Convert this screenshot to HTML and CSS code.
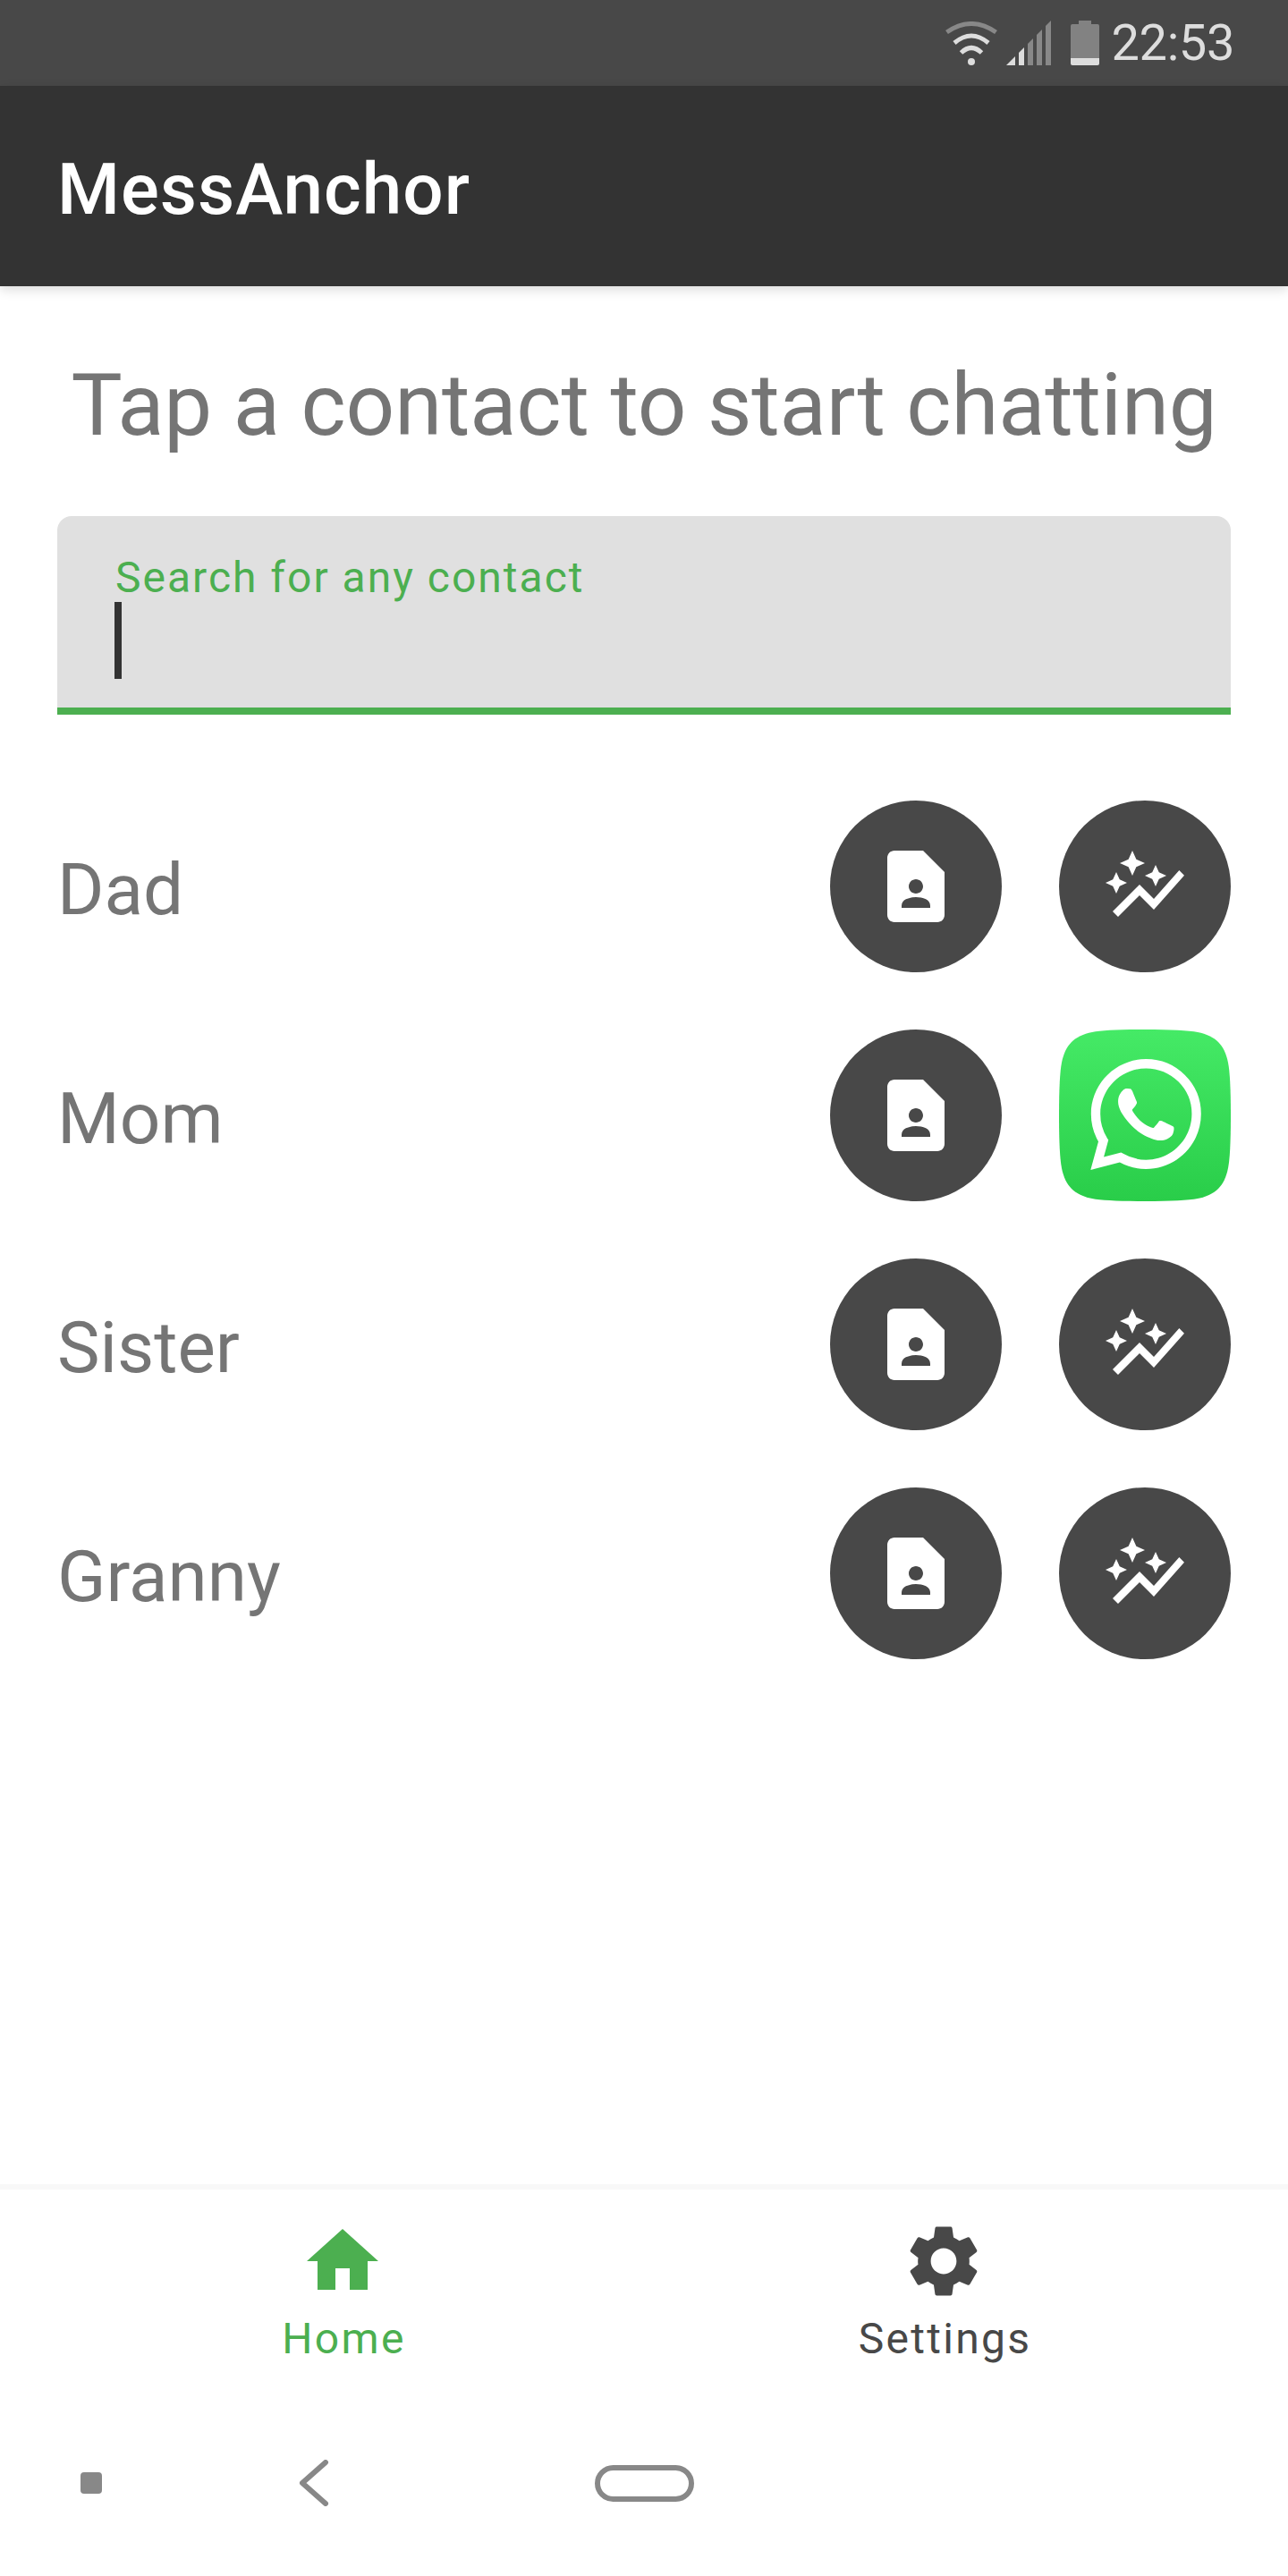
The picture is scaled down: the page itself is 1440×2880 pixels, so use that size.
FILE: index.html
```html
<!DOCTYPE html>
<html lang="en">
<head>
  <meta charset="UTF-8" />
  <meta name="viewport" content="width=device-width, initial-scale=1.0"/>
  <title>MessAnchor</title>
  <link rel="stylesheet" href="styles.css">
</head>
<body>
  <svg class="icon-defs" width="0" height="0">
    <symbol id="icon-contact" viewBox="0 0 24 24">
      <path d="M14 2H6c-1.1 0-2 .9-2 2v16c0 1.1.9 2 2 2h12c1.1 0 2-.9 2-2V8l-6-6zm-2 8c1.1 0 2 .9 2 2s-.9 2-2 2-2-.9-2-2 .9-2 2-2zm4 8H8v-.57c0-.81.48-1.53 1.22-1.85.85-.37 1.79-.58 2.78-.58s1.93.21 2.78.58c.74.32 1.22 1.04 1.22 1.85V18z"/>
    </symbol>
    <symbol id="icon-graph" viewBox="0 0 24 24">
      <path d="M14.06 9.94L12 9l2.06-.94L15 6l.94 2.06L18 9l-2.06.94L15 12l-.94-2.06zM4 14l.94-2.06L7 11l-2.06-.94L4 8l-.94 2.06L1 11l2.06.94L4 14zM8.5 9l1.09-2.41L12 5.5 9.59 4.41 8.5 2 7.41 4.41 5 5.5l2.41 1.09L8.5 9zM4.5 20.5l6-6.01 4 4L23 8.93l-1.41-1.41-7.09 7.97-4-4L3 19l1.5 1.5z"/>
    </symbol>
  </svg>

  <div class="phone">
    <div class="status-bar">
      <svg class="status-wifi" width="58" height="49" viewBox="0 0 58 49" fill="none">
        <path d="M1.5 12Q29 -7 56.5 12" stroke="#888" stroke-width="5"/>
        <path d="M10 24Q29 8 48 24" stroke="#ddd" stroke-width="5"/>
        <path d="M17.5 35Q29 24 40.5 35" stroke="#ddd" stroke-width="5"/>
        <circle cx="29" cy="45" r="4" fill="#ddd"/>
      </svg>
      <svg class="status-signal" width="50" height="50" viewBox="0 0 50 50">
        <polygon points="0,50 10,40 10,50" fill="#ddd"/>
        <polygon points="14,50 14,36 20,30 20,50" fill="#ddd"/>
        <polygon points="24,50 24,26 30,20 30,50" fill="#888"/>
        <polygon points="34,50 34,16 40,10 40,50" fill="#888"/>
        <polygon points="44,50 44,6 50,0 50,50" fill="#888"/>
      </svg>
      <svg class="status-battery" width="32" height="50" viewBox="0 0 32 50">
        <path d="M9 0h14v4h7a2 2 0 0 1 2 2v36H0V6a2 2 0 0 1 2-2h7z" fill="#828282"/>
        <path d="M0 42h32v6a2 2 0 0 1-2 2H2a2 2 0 0 1-2-2z" fill="#ddd"/>
      </svg>
      <span class="status-time">22:53</span>
    </div>

    <header class="app-bar">
      <h1>MessAnchor</h1>
    </header>

    <main class="content">
      <h2 class="page-title">Tap a contact to start chatting</h2>

      <div class="search-field">
        <label class="search-label">Search for any contact</label>
        <div class="search-caret"></div>
      </div>

      <ul class="contact-list">
        <li class="contact-row">
          <span class="contact-name">Dad</span>
          <div class="contact-actions">
            <button class="round-btn"><svg width="96" height="96"><use href="#icon-contact"/></svg></button>
            <button class="round-btn"><svg width="96" height="96"><use href="#icon-graph"/></svg></button>
          </div>
        </li>
        <li class="contact-row">
          <span class="contact-name">Mom</span>
          <div class="contact-actions">
            <button class="round-btn"><svg width="96" height="96"><use href="#icon-contact"/></svg></button>
            <svg class="whatsapp" width="192" height="192" viewBox="0 0 192 192">
              <defs>
                <linearGradient id="wa-bg" x1="0" y1="0" x2="0" y2="1">
                  <stop offset="0" stop-color="#45ea66"/>
                  <stop offset="1" stop-color="#29cd49"/>
                </linearGradient>
              </defs>
              <path d="M96 0C125 0 145 1 155 3C175 7 185 17 189 37C191 47 192 67 192 96C192 125 191 145 189 155C185 175 175 185 155 189C145 191 125 192 96 192C67 192 47 191 37 189C17 185 7 175 3 155C1 145 0 125 0 96C0 67 1 47 3 37C7 17 17 7 37 3C47 1 67 0 96 0Z" fill="url(#wa-bg)"/>
              <g transform="translate(35 33) scale(5.17)">
                <path fill="#fff" d="M17.472 14.382c-.297-.149-1.758-.867-2.03-.967-.273-.099-.471-.148-.67.15-.197.297-.767.966-.94 1.164-.173.199-.347.223-.644.075-.297-.15-1.255-.463-2.39-1.475-.883-.788-1.48-1.761-1.653-2.059-.173-.297-.018-.458.13-.606.134-.133.298-.347.446-.52.149-.174.198-.298.298-.497.099-.198.05-.371-.025-.52-.075-.149-.669-1.612-.916-2.207-.242-.579-.487-.5-.669-.51-.173-.008-.371-.01-.57-.01-.198 0-.52.074-.792.372-.272.297-1.04 1.016-1.04 2.479 0 1.462 1.065 2.875 1.213 3.074.149.198 2.096 3.2 5.077 4.487.709.306 1.262.489 1.694.625.712.227 1.36.195 1.871.118.571-.085 1.758-.719 2.006-1.413.248-.694.248-1.289.173-1.413-.074-.124-.272-.198-.57-.347m-5.421 7.403h-.004a9.87 9.87 0 01-5.031-1.378l-.361-.214-3.741.982.998-3.648-.235-.374a9.86 9.86 0 01-1.51-5.26c.001-5.45 4.436-9.884 9.888-9.884 2.64 0 5.122 1.03 6.988 2.898a9.825 9.825 0 012.893 6.994c-.003 5.45-4.437 9.884-9.885 9.884m8.413-18.297A11.815 11.815 0 0012.05 0C5.495 0 .16 5.335.157 11.892c0 2.096.547 4.142 1.588 5.945L.057 24l6.305-1.654a11.882 11.882 0 005.683 1.448h.005c6.554 0 11.89-5.335 11.893-11.893a11.821 11.821 0 00-3.48-8.413z"/>
              </g>
            </svg>
          </div>
        </li>
        <li class="contact-row">
          <span class="contact-name">Sister</span>
          <div class="contact-actions">
            <button class="round-btn"><svg width="96" height="96"><use href="#icon-contact"/></svg></button>
            <button class="round-btn"><svg width="96" height="96"><use href="#icon-graph"/></svg></button>
          </div>
        </li>
        <li class="contact-row">
          <span class="contact-name">Granny</span>
          <div class="contact-actions">
            <button class="round-btn"><svg width="96" height="96"><use href="#icon-contact"/></svg></button>
            <button class="round-btn"><svg width="96" height="96"><use href="#icon-graph"/></svg></button>
          </div>
        </li>
      </ul>
    </main>

    <nav class="tab-bar">
      <a class="tab tab-active">
        <svg width="96" height="96" viewBox="0 0 24 24"><path d="M10 20v-6h4v6h5v-8h3L12 3 2 12h3v8z"/></svg>
        <span class="tab-label">Home</span>
      </a>
      <a class="tab">
        <svg width="96" height="96" viewBox="0 0 24 24"><path d="M19.14 12.94c.04-.3.06-.61.06-.94 0-.32-.02-.64-.07-.94l2.03-1.58c.18-.14.23-.41.12-.61l-1.92-3.32c-.12-.22-.37-.29-.59-.22l-2.39.96c-.5-.38-1.03-.7-1.62-.94l-.36-2.54c-.04-.24-.24-.41-.48-.41h-3.84c-.24 0-.43.17-.47.41l-.36 2.54c-.59.24-1.13.57-1.62.94l-2.39-.96c-.22-.08-.47 0-.59.22L2.74 8.87c-.12.21-.08.47.12.61l2.03 1.58c-.05.3-.09.63-.09.94s.02.64.07.94l-2.03 1.58c-.18.14-.23.41-.12.61l1.92 3.32c.12.22.37.29.59.22l2.39-.96c.5.38 1.03.7 1.62.94l.36 2.54c.05.24.24.41.48.41h3.84c.24 0 .44-.17.47-.41l.36-2.54c.59-.24 1.13-.56 1.62-.94l2.39.96c.22.08.47 0 .59-.22l1.92-3.32c.12-.22.07-.47-.12-.61l-2.01-1.58zM12 15.6c-1.98 0-3.6-1.62-3.6-3.6s1.62-3.6 3.6-3.6 3.6 1.62 3.6 3.6-1.62 3.6-3.6 3.6z"/></svg>
        <span class="tab-label">Settings</span>
      </a>
    </nav>

    <div class="system-nav">
      <div class="sys-square"></div>
      <svg class="sys-back" width="34" height="52" viewBox="0 0 34 52" fill="none">
        <path d="M30 3L4 26L30 49" stroke="#888" stroke-width="6" stroke-linecap="round" stroke-linejoin="round"/>
      </svg>
      <div class="sys-home"></div>
    </div>
  </div>
</body>
</html>
```

FILE: styles.css
```css
body {
  margin: 0;
  padding: 0;
  background: #fff;
  font-family: Roboto, "Noto Sans", sans-serif;
}

.icon-defs {
  position: absolute;
}

.phone {
  display: flex;
  flex-direction: column;
  height: 2880px;
  width: 1440px;
  overflow: hidden;
}

/* status bar */
.status-bar {
  display: flex;
  align-items: flex-start;
  height: 96px;
  padding: 23px 60px 0 0;
  box-sizing: border-box;
  justify-content: flex-end;
  background: #484848;
}

.status-wifi {
  margin-top: 1px;
  margin-right: 10px;
}

.status-signal {
  margin-right: 22px;
}

.status-battery {
  margin-right: 14px;
}

.status-time {
  font-size: 56px;
  line-height: 50px;
  letter-spacing: -0.4px;
  color: #ddd;
}

/* app bar */
.app-bar {
  display: flex;
  align-items: center;
  height: 224px;
  padding: 8px 64px 0;
  box-sizing: border-box;
  background: #333;
  box-shadow: 0 4px 12px rgba(0,0,0,0.14);
  position: relative;
}

.app-bar h1 {
  margin: 0;
  font-size: 80px;
  font-weight: 500;
  letter-spacing: 1px;
  color: #fff;
}

/* content */
.content {
  flex: 1;
  padding: 77px 64px 0;
}

.page-title {
  margin: 0 0 68px;
  font-size: 96px;
  line-height: 112px;
  font-weight: 400;
  letter-spacing: -0.15px;
  text-align: center;
  color: #757575;
}

.search-field {
  padding: 41px 64px 32px;
  background: #e0e0e0;
  border-bottom: 8px solid #4caf50;
  border-radius: 16px 16px 0 0;
}

.search-label {
  display: block;
  height: 55px;
  padding-left: 1px;
  font-size: 48px;
  line-height: 56px;
  letter-spacing: 2px;
  color: #4caf50;
}

.search-caret {
  width: 8px;
  height: 86px;
  background: #333;
}

.contact-list {
  list-style: none;
  margin: 96px 0 0;
  padding: 0;
  display: flex;
  flex-direction: column;
  gap: 64px;
}

.contact-row {
  display: flex;
  align-items: center;
  justify-content: space-between;
  height: 192px;
}

.contact-name {
  padding-top: 8px;
  font-size: 80px;
  color: #757575;
}

.contact-actions {
  display: flex;
  gap: 64px;
}

.round-btn {
  display: flex;
  align-items: center;
  justify-content: center;
  width: 192px;
  height: 192px;
  padding: 0;
  border: none;
  border-radius: 50%;
  background: #484848;
  fill: #fff;
}

/* bottom tabs */
.tab-bar {
  display: grid;
  grid-template-columns: 672px 672px;
  padding: 32px 49px 0 47px;
  height: 244px;
  box-sizing: border-box;
  border-top: 6px solid #f8f8f8;
  background: #fff;
}

.tab {
  display: flex;
  flex-direction: column;
  align-items: center;
  fill: #484848;
  color: #484848;
}

.tab-active {
  fill: #4caf50;
  color: #4caf50;
}

.tab-label {
  margin-top: 11px;
  padding-left: 3px;
  font-size: 48px;
  line-height: 56px;
  letter-spacing: 2.3px;
}

/* android nav */
.system-nav {
  display: flex;
  align-items: center;
  height: 194px;
  padding: 0 0 14px 90px;
  box-sizing: border-box;
  background: #fff;
}

.sys-square {
  width: 24px;
  height: 24px;
  border-radius: 4px;
  background: #888;
}

.sys-back {
  margin-left: 220px;
}

.sys-home {
  width: 111px;
  height: 41px;
  margin-left: 297px;
  box-sizing: border-box;
  border: 6px solid #888;
  border-radius: 21px;
}
```
